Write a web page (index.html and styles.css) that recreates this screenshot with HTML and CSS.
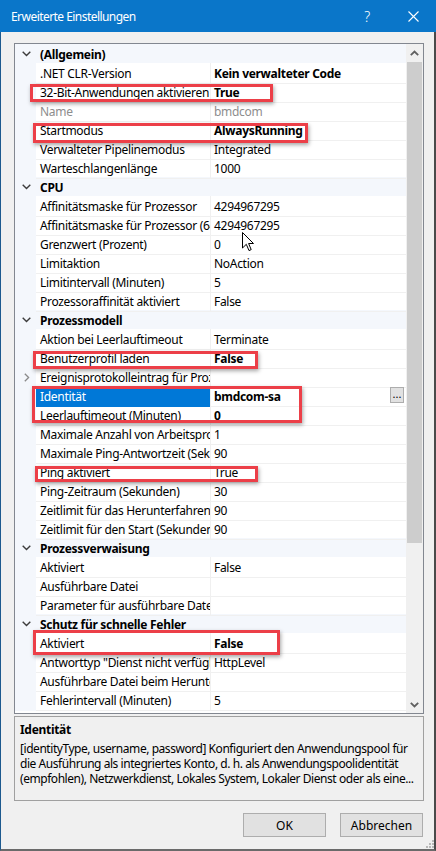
FILE: index.html
```html
<!DOCTYPE html>
<html lang="de">
<head>
<meta charset="utf-8">
<title>Erweiterte Einstellungen</title>
<link rel="stylesheet" href="styles.css">
</head>
<body>
<div class="window">
  <div class="titlebar">
    <span class="title">Erweiterte Einstellungen</span>
    <span class="capbtn help">?</span>
    <span class="capbtn close"><svg width="11" height="11" viewBox="0 0 11 11"><path d="M0.5 0.5 L10.5 10.5 M10.5 0.5 L0.5 10.5" stroke="#fff" stroke-width="1.1" fill="none"/></svg></span>
  </div>
  <div class="client">
    <div class="grid">
      <div class="rows">
        <div class="row cat"><span class="gut"><svg class="chev" width="9" height="6" viewBox="0 0 9 6"><path d="M0.7 0.7 L4.5 4.5 L8.3 0.7" stroke="#3c3c3c" stroke-width="1.4" fill="none"/></svg></span><span class="cname">(Allgemein)</span></div>
        <div class="row"><span class="gut"></span><span class="name">.NET CLR-Version</span><span class="val b">Kein verwalteter Code</span></div>
        <div class="row"><span class="gut"></span><span class="name">32-Bit-Anwendungen aktivieren</span><span class="val b">True</span></div>
        <div class="row dis"><span class="gut"></span><span class="name">Name</span><span class="val">bmdcom</span></div>
        <div class="row"><span class="gut"></span><span class="name">Startmodus</span><span class="val b">AlwaysRunning</span></div>
        <div class="row"><span class="gut"></span><span class="name">Verwalteter Pipelinemodus</span><span class="val">Integrated</span></div>
        <div class="row"><span class="gut"></span><span class="name">Warteschlangenlänge</span><span class="val">1000</span></div>
        <div class="row cat"><span class="gut"><svg class="chev" width="9" height="6" viewBox="0 0 9 6"><path d="M0.7 0.7 L4.5 4.5 L8.3 0.7" stroke="#3c3c3c" stroke-width="1.4" fill="none"/></svg></span><span class="cname">CPU</span></div>
        <div class="row"><span class="gut"></span><span class="name">Affinitätsmaske für Prozessor</span><span class="val">4294967295</span></div>
        <div class="row"><span class="gut"></span><span class="name">Affinitätsmaske für Prozessor (64-Bit-Option)</span><span class="val">4294967295</span></div>
        <div class="row"><span class="gut"></span><span class="name">Grenzwert (Prozent)</span><span class="val">0</span></div>
        <div class="row"><span class="gut"></span><span class="name">Limitaktion</span><span class="val">NoAction</span></div>
        <div class="row"><span class="gut"></span><span class="name">Limitintervall (Minuten)</span><span class="val">5</span></div>
        <div class="row"><span class="gut"></span><span class="name">Prozessoraffinität aktiviert</span><span class="val">False</span></div>
        <div class="row cat"><span class="gut"><svg class="chev" width="9" height="6" viewBox="0 0 9 6"><path d="M0.7 0.7 L4.5 4.5 L8.3 0.7" stroke="#3c3c3c" stroke-width="1.4" fill="none"/></svg></span><span class="cname">Prozessmodell</span></div>
        <div class="row"><span class="gut"></span><span class="name">Aktion bei Leerlauftimeout</span><span class="val">Terminate</span></div>
        <div class="row"><span class="gut"></span><span class="name">Benutzerprofil laden</span><span class="val b">False</span></div>
        <div class="row"><span class="gut"><svg class="exp" width="6" height="9" viewBox="0 0 6 9"><path d="M0.8 0.7 L4.6 4.5 L0.8 8.3" stroke="#8a8a8a" stroke-width="1.3" fill="none"/></svg></span><span class="name">Ereignisprotokolleintrag für Prozessmodell</span><span class="val"></span></div>
        <div class="row sel"><span class="gut"></span><span class="name">Identität</span><span class="val b">bmdcom-sa<span class="dots">...</span></span></div>
        <div class="row"><span class="gut"></span><span class="name">Leerlauftimeout (Minuten)</span><span class="val b">0</span></div>
        <div class="row"><span class="gut"></span><span class="name">Maximale Anzahl von Arbeitsprozessen</span><span class="val">1</span></div>
        <div class="row"><span class="gut"></span><span class="name">Maximale Ping-Antwortzeit (Sekunden)</span><span class="val">90</span></div>
        <div class="row"><span class="gut"></span><span class="name">Ping aktiviert</span><span class="val">True</span></div>
        <div class="row"><span class="gut"></span><span class="name">Ping-Zeitraum (Sekunden)</span><span class="val">30</span></div>
        <div class="row"><span class="gut"></span><span class="name">Zeitlimit für das Herunterfahren (Sekunden)</span><span class="val">90</span></div>
        <div class="row"><span class="gut"></span><span class="name">Zeitlimit für den Start (Sekunden)</span><span class="val">90</span></div>
        <div class="row cat"><span class="gut"><svg class="chev" width="9" height="6" viewBox="0 0 9 6"><path d="M0.7 0.7 L4.5 4.5 L8.3 0.7" stroke="#3c3c3c" stroke-width="1.4" fill="none"/></svg></span><span class="cname">Prozessverwaisung</span></div>
        <div class="row"><span class="gut"></span><span class="name">Aktiviert</span><span class="val">False</span></div>
        <div class="row"><span class="gut"></span><span class="name">Ausführbare Datei</span><span class="val"></span></div>
        <div class="row"><span class="gut"></span><span class="name">Parameter für ausführbare Datei</span><span class="val"></span></div>
        <div class="row cat"><span class="gut"><svg class="chev" width="9" height="6" viewBox="0 0 9 6"><path d="M0.7 0.7 L4.5 4.5 L8.3 0.7" stroke="#3c3c3c" stroke-width="1.4" fill="none"/></svg></span><span class="cname">Schutz für schnelle Fehler</span></div>
        <div class="row"><span class="gut"></span><span class="name">Aktiviert</span><span class="val b">False</span></div>
        <div class="row"><span class="gut"></span><span class="name">Antworttyp "Dienst nicht verfügbar"</span><span class="val">HttpLevel</span></div>
        <div class="row"><span class="gut"></span><span class="name">Ausführbare Datei beim Herunterfahren</span><span class="val"></span></div>
        <div class="row"><span class="gut"></span><span class="name">Fehlerintervall (Minuten)</span><span class="val">5</span></div>
      </div>
      <div class="scrollbar">
        <span class="arrow"><svg width="9" height="6" viewBox="0 0 9 6"><path d="M0.8 5.2 L4.5 1.5 L8.2 5.2" stroke="#606060" stroke-width="1.8" fill="none"/></svg></span>
        <span class="track"><span class="thumb"></span></span>
        <span class="arrow"><svg width="9" height="6" viewBox="0 0 9 6"><path d="M0.8 0.8 L4.5 4.5 L8.2 0.8" stroke="#606060" stroke-width="1.8" fill="none"/></svg></span>
      </div>
      <span class="mark m1"></span>
      <span class="mark m2"></span>
      <span class="mark m3"></span>
      <span class="mark m4"></span>
      <span class="mark m5"></span>
      <span class="mark m6"></span>
      <svg class="cursor" width="13" height="20" viewBox="0 0 13 20"><path d="M0.5 0.5 L0.5 16 L4.3 12.3 L7 18.6 L9.2 17.6 L6.6 11.5 L11.5 11.5 Z" fill="#fff" stroke="#000" stroke-width="1" stroke-linejoin="miter"/></svg>
    </div>
    <div class="desc">
      <div class="desc-title">Identität</div>
      <div class="desc-text">[identityType, username, password] Konfiguriert den Anwendungspool für<br>die Ausführung als integriertes Konto, d. h. als Anwendungspoolidentität<br>(empfohlen), Netzwerkdienst, Lokales System, Lokaler Dienst oder als eine...</div>
    </div>
    <div class="buttons">
      <button class="btn">OK</button>
      <button class="btn">Abbrechen</button>
    </div>
    <svg class="grip" width="9" height="9" viewBox="0 0 9 9"><g fill="#b8b8b8"><rect x="7" y="1" width="2" height="2"/><rect x="4" y="4" width="2" height="2"/><rect x="7" y="4" width="2" height="2"/><rect x="1" y="7" width="2" height="2"/><rect x="4" y="7" width="2" height="2"/><rect x="7" y="7" width="2" height="2"/></g></svg>
  </div>
</div>
</body>
</html>
```

FILE: styles.css
```css
* { box-sizing: border-box; }
html, body { margin: 0; padding: 0; }
body {
  width: 436px;
  height: 851px;
  overflow: hidden;
  background: #f0f0f0;
  font-family: "Noto Sans", "Open Sans", sans-serif;
  font-size: 12px;
  letter-spacing: -0.3px;
  color: #000;
}
.window {
  width: 436px;
  height: 851px;
  display: flex;
  flex-direction: column;
}
.titlebar {
  height: 32px;
  flex: none;
  background: #0a76c9;
  color: #fff;
  display: flex;
  align-items: center;
  padding-left: 11px;
}
.title { flex: 1; font-size: 12px; letter-spacing: -0.55px; }
.capbtn {
  width: 46px;
  height: 32px;
  display: flex;
  align-items: center;
  justify-content: center;
}
.help { font-size: 14px; font-weight: 300; }
.client {
  flex: 1;
  position: relative;
  border-left: 1px solid #1d5a8f;
  border-right: 2px solid #4a4a4a;
  border-bottom: 2px solid #6a6a6a;
  padding: 11px 10px 0 13px;
  display: flex;
  flex-direction: column;
}
.grid {
  position: relative;
  width: 410px;
  height: 671px;
  flex: none;
  border: 1px solid #828790;
  background: #fff;
  display: flex;
}
.rows { width: 391px; flex: none; }
.row {
  display: grid;
  grid-template-columns: 21px 175px 195px;
  height: 19px;
  white-space: nowrap;
}
.row > span:not(.gut) {
  padding-top: 2px;
  line-height: 18px;
}
.gut {
  background: #f4f7fc;
  display: flex;
  align-items: center;
  justify-content: center;
}
.name {
  overflow-x: clip;
  overflow-y: visible;
  padding-left: 4px;
  border-right: 1px solid #f0f0f0;
  border-bottom: 1px solid #f0f0f0;
}
.val {
  position: relative;
  overflow-x: clip;
  overflow-y: visible;
  padding-left: 3px;
  border-bottom: 1px solid #f0f0f0;
}
.b { font-weight: 700; }
.dis .name, .dis .val { color: #8d8d8d; }
.row.sel > .name { background: #0078d7; color: #fff; border-bottom-color: #0078d7; padding-top: 2px; }
.cat { background: #f4f7fc; }
.cat .cname {
  grid-column: 2 / 4;
  padding-left: 4px;
  font-weight: 700;
}
.chev { margin-left: 1px; }
.exp { margin-left: 2px; }
.val .dots {
  position: absolute;
  right: 2px;
  top: 1px;
  width: 14px;
  height: 16px;
  border: 1px solid #adadad;
  background: #e1e1e1;
  font-weight: 400;
  font-size: 11px;
  line-height: 12px;
  text-align: center;
  letter-spacing: 0;
}
.scrollbar {
  width: 17px;
  flex: none;
  background: #f0f0f0;
  display: flex;
  flex-direction: column;
}
.arrow {
  height: 17px;
  flex: none;
  display: flex;
  align-items: center;
  justify-content: center;
}
.track { flex: 1; padding: 1px 1px 0 1px; }
.thumb {
  display: block;
  height: 481px;
  background: #cdcdcd;
}
.mark {
  position: absolute;
  border: 3px solid #ec3f48;
  box-shadow: 1px 2px 4px rgba(0, 0, 0, 0.35);
}
.m1 { left: 15px; top: 40px; width: 243px; height: 18px; }
.m2 { left: 18px; top: 79px; width: 275px; height: 20px; }
.m3 { left: 18px; top: 307px; width: 225px; height: 18px; }
.m4 { left: 17px; top: 342px; width: 270px; height: 37px; }
.m5 { left: 20px; top: 422px; width: 223px; height: 16px; }
.m6 { left: 18px; top: 586px; width: 247px; height: 25px; }
.cursor { position: absolute; left: 227px; top: 188px; }
.desc {
  margin-top: 2px;
  width: 410px;
  height: 85px;
  flex: none;
  border: 1px solid #a0a0a0;
  padding: 5px 5px 0 5px;
  line-height: 15px;
  white-space: nowrap;
}
.desc-title { font-weight: 700; margin-bottom: 4px; }
.desc-text { letter-spacing: -0.45px; }
.buttons {
  margin-top: 12px;
  display: flex;
  justify-content: flex-end;
  gap: 14px;
  padding-right: 1px;
}
.btn {
  width: 83px;
  height: 24px;
  border: 1px solid #adadad;
  background: #e1e1e1;
  font-family: inherit;
  font-size: 12px;
  letter-spacing: 0;
  color: #000;
  padding: 0;
}
.grip { position: absolute; right: 0; bottom: 1px; }
```
